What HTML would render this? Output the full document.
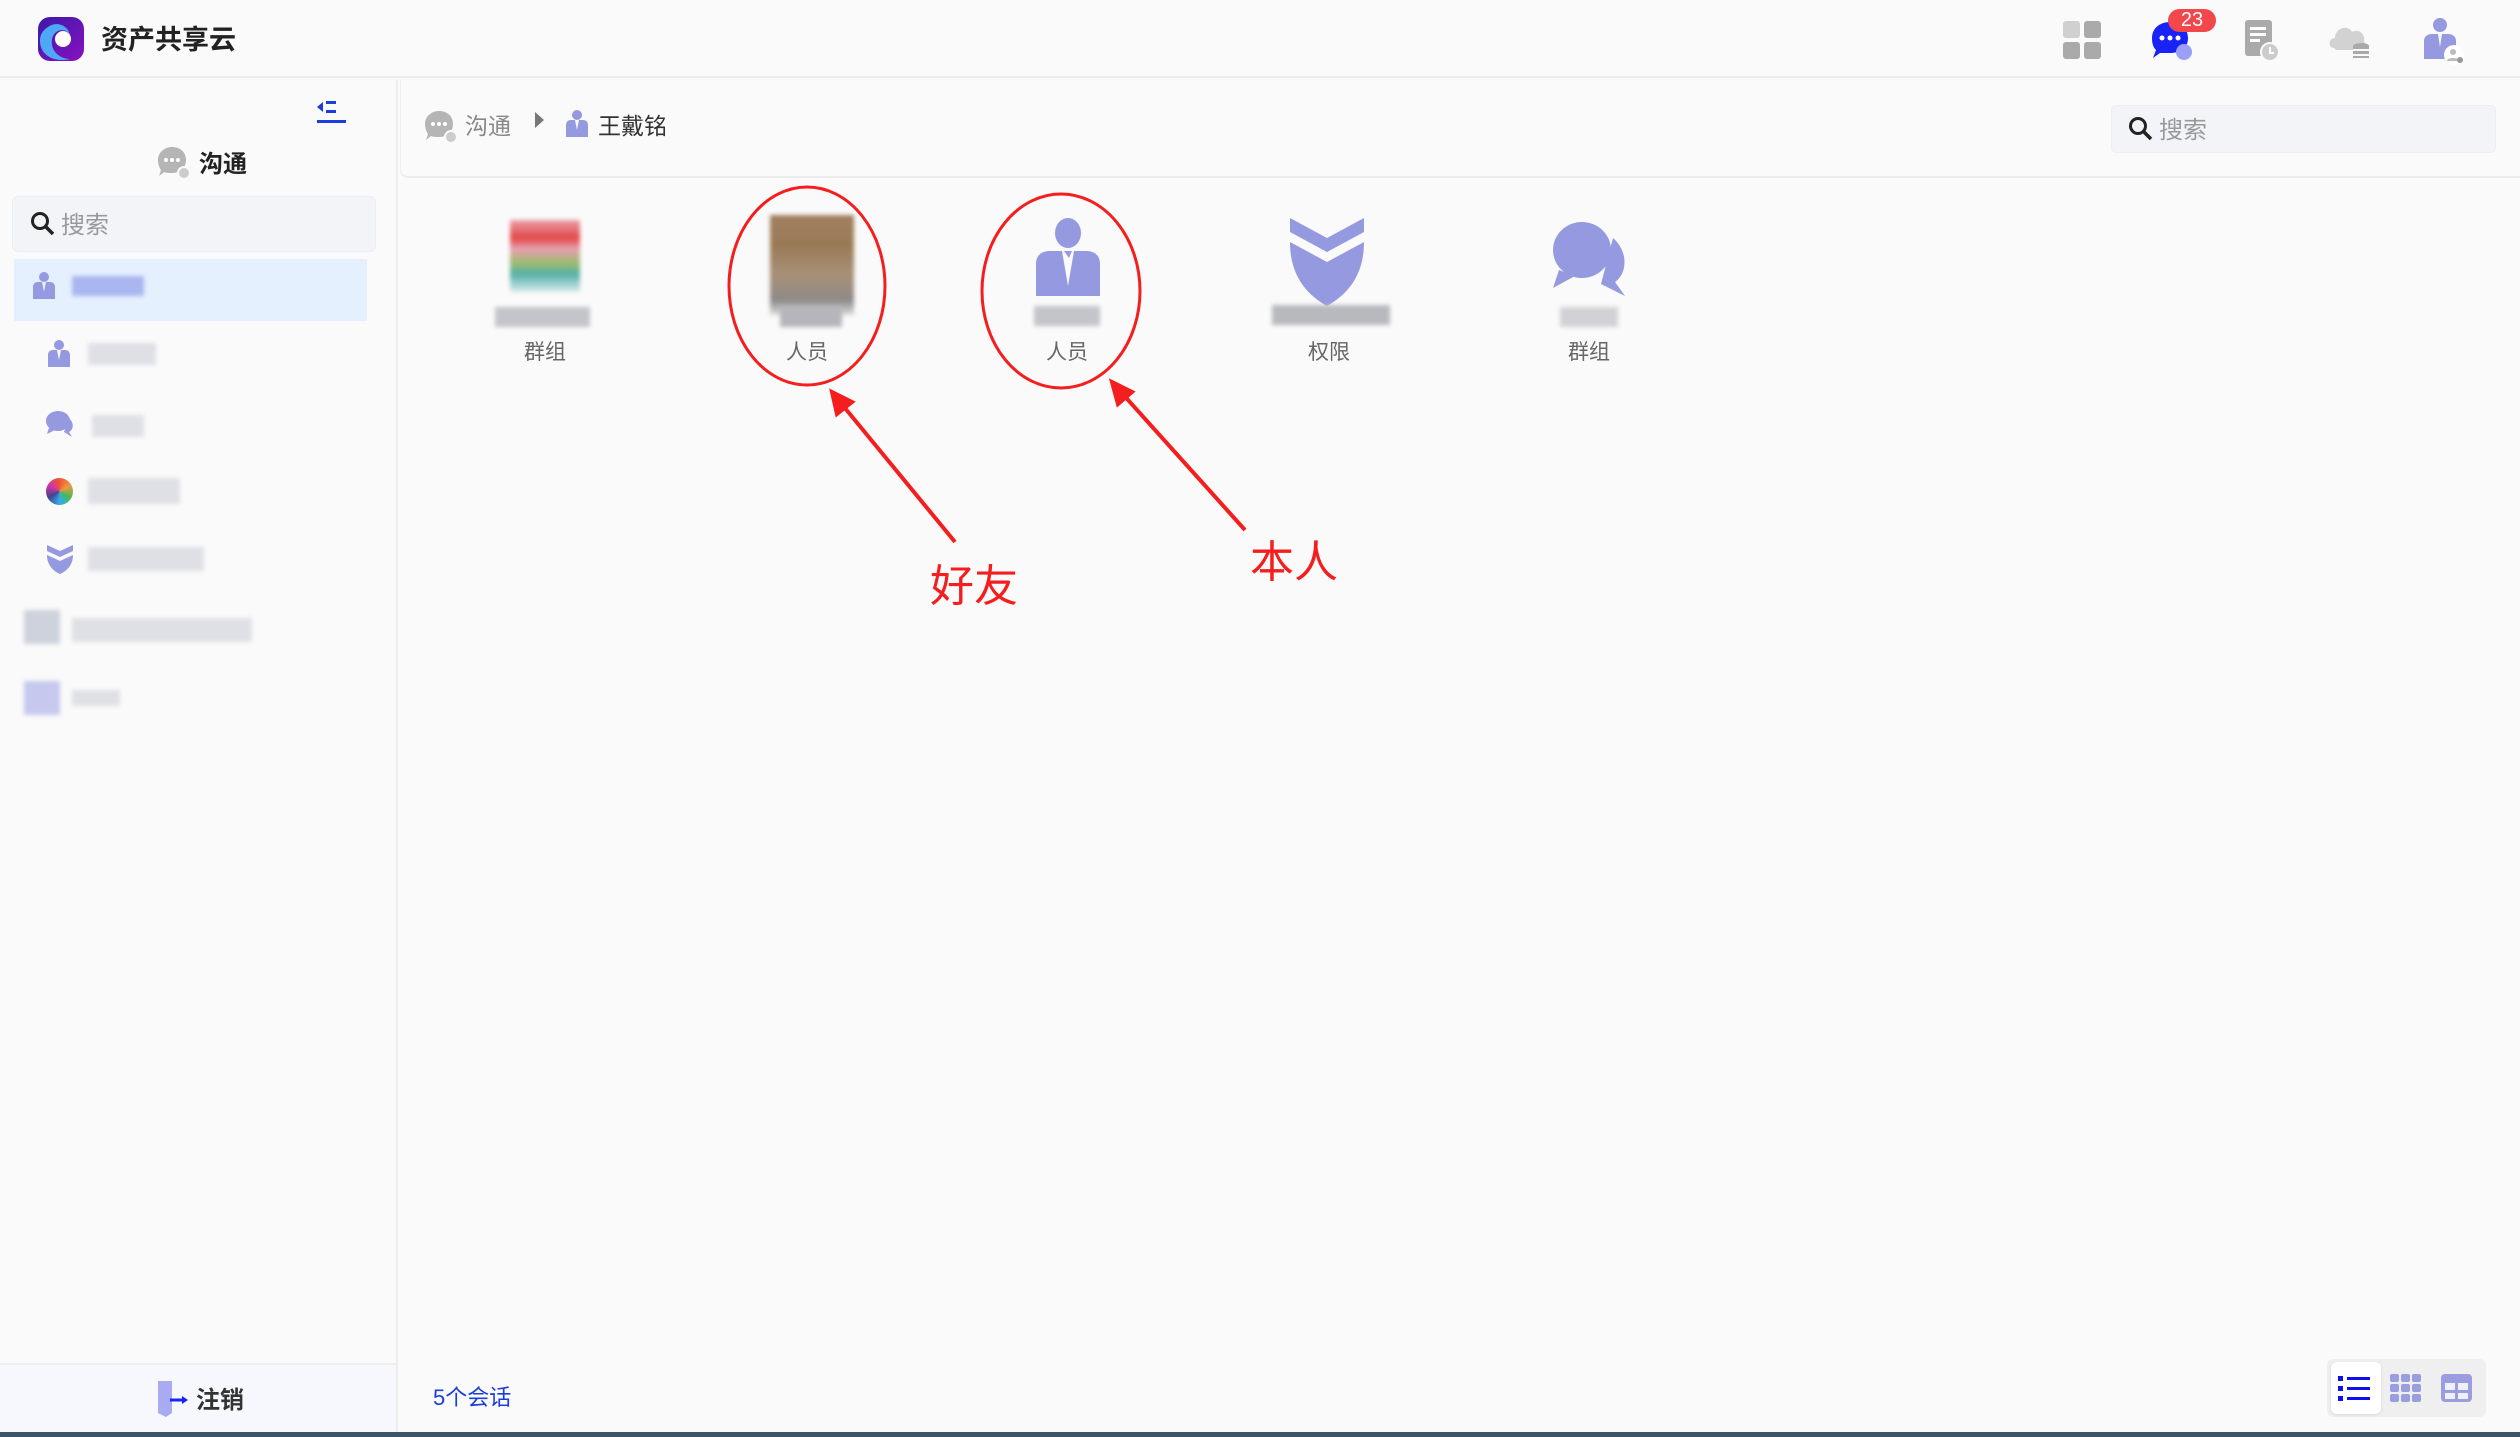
<!DOCTYPE html>
<html><head><meta charset="utf-8">
<style>
*{margin:0;padding:0;box-sizing:border-box}
body{width:2520px;height:1437px;background:#fafafa;font-family:"Liberation Sans","Noto Sans CJK SC",sans-serif;position:relative;overflow:hidden;color:#333}
.a{position:absolute}
.blur{position:absolute;background:#dfe0e6;filter:blur(2px)}
.lbl{position:absolute;font-size:21px;color:#666;width:120px;text-align:center;top:336px}
</style></head><body>
<div class="a" style="left:0;top:0;width:2520px;height:78px;background:#fafafa;border-bottom:2px solid #ececec"></div>
<svg class="a" style="left:36px;top:15px" width="52" height="48" viewBox="0 0 52 48">
<defs><linearGradient id="g1" x1="0" y1="0" x2="1" y2="1"><stop offset="0" stop-color="#3a1aa8"/><stop offset="1" stop-color="#8a10c0"/></linearGradient></defs>
<rect x="2" y="2" width="46" height="44" rx="12" fill="url(#g1)"/>
<path d="M4 26 C4 40 18 48 34 44 C24 44 14 36 16 24 C18 14 30 12 34 20 C32 10 20 6 12 12 C6 16 4 20 4 26Z" fill="#4fa8f5"/>
<circle cx="27" cy="24" r="8" fill="#fff"/>
</svg>
<div class="a" style="left:101px;top:18px;font-size:27px;font-weight:bold;color:#222">资产共享云</div>
<svg class="a" style="left:2063px;top:21px" width="38" height="38"><rect x="0" y="0" width="17" height="17" rx="3" fill="#d0d0d0"/><rect x="21" y="0" width="17" height="17" rx="3" fill="#aaa"/><rect x="0" y="21" width="17" height="17" rx="3" fill="#aaa"/><rect x="21" y="21" width="17" height="17" rx="3" fill="#aaa"/></svg>
<svg class="a" style="left:2150px;top:20px" width="46" height="42"><path d="M2 18 C2 8 10 2 20 2 C30 2 38 8 38 18 C38 28 30 33 20 33 L10 33 L3 38 L6 30 C3 27 2 23 2 18Z" fill="#1a23f5"/><circle cx="12" cy="18" r="2.5" fill="#fff"/><circle cx="20" cy="18" r="2.5" fill="#fff"/><circle cx="28" cy="18" r="2.5" fill="#fff"/><circle cx="34" cy="32" r="8" fill="#9aa0f5"/></svg>
<div class="a" style="left:2168px;top:9px;width:48px;height:23px;border-radius:12px;background:#f2484b;color:#fff;font-size:20px;text-align:center;line-height:23px">23</div>
<svg class="a" style="left:2244px;top:19px" width="36" height="42"><rect x="1" y="1" width="27" height="36" rx="3" fill="#aaa"/><rect x="6" y="8" width="16" height="3" fill="#fff"/><rect x="6" y="14" width="16" height="3" fill="#fff"/><rect x="6" y="20" width="10" height="3" fill="#fff"/><circle cx="26" cy="33" r="9" fill="#ccc" stroke="#fafafa" stroke-width="2"/><path d="M26 28 V34 H30" stroke="#fff" stroke-width="2" fill="none"/></svg>
<svg class="a" style="left:2328px;top:20px" width="44" height="40"><path d="M6 28 C0 28 0 18 7 18 C7 8 20 4 24 12 C30 8 38 14 36 22 C40 24 38 30 34 30 L8 30Z" fill="#d2d2d2"/><ellipse cx="33" cy="26" rx="8" ry="3" fill="#aaa"/><rect x="25" y="26" width="16" height="12" fill="#aaa"/><rect x="25" y="29" width="16" height="2" fill="#fafafa"/><rect x="25" y="34" width="16" height="2" fill="#fafafa"/></svg>
<svg class="a" style="left:2422px;top:17px" width="44" height="48"><circle cx="18" cy="8" r="7" fill="#9499e0"/><path d="M2 42 V24 C2 19 6 17 10 17 L16 17 L18 30 L20 17 L26 17 C30 17 34 19 34 24 V42Z" fill="#9499e0"/><circle cx="32" cy="38" r="10" fill="#fff"/><circle cx="31" cy="35" r="3" fill="#bbb"/><path d="M25 44 C25 40 37 40 37 44Z" fill="#bbb"/><circle cx="38" cy="43" r="3" fill="#999"/></svg>

<div class="a" style="left:0;top:80px;width:398px;height:1283px;background:#fafafa;border-right:2px solid #eee"></div>
<svg class="a" style="left:317px;top:99px" width="30" height="26"><path d="M0 8 L6 3 V13Z" fill="#1a3ddb"/><rect x="9" y="2" width="10" height="3" fill="#1a3ddb"/><rect x="9" y="11" width="10" height="3" fill="#1a3ddb"/><rect x="0" y="21" width="29" height="3" fill="#1a3ddb"/></svg>
<svg class="a" style="left:157px;top:146px" width="36" height="34"><path d="M1 14 C1 6 8 1 15 1 C23 1 29 6 29 14 C29 22 23 27 15 27 C12 27 9 27 7 26 L2 30 L4 24 C2 21 1 18 1 14Z" fill="#b5b5b5"/><circle cx="9" cy="14" r="2" fill="#fff"/><circle cx="15" cy="14" r="2" fill="#fff"/><circle cx="21" cy="14" r="2" fill="#fff"/><circle cx="27" cy="27" r="6" fill="#ccc" stroke="#fafafa" stroke-width="2"/></svg>
<div class="a" style="left:199px;top:144px;font-size:24px;font-weight:bold;color:#222">沟通</div>
<div class="a" style="left:12px;top:196px;width:364px;height:56px;background:#f3f4f8;border:1px solid #eceef5;border-radius:6px"></div>
<svg class="a" style="left:30px;top:211px" width="26" height="26"><circle cx="10" cy="10" r="7.5" stroke="#222" stroke-width="3" fill="none"/><path d="M15 15 L23 23" stroke="#222" stroke-width="3.5"/></svg>
<div class="a" style="left:61px;top:205px;font-size:24px;color:#999">搜索</div>
<div class="a" style="left:14px;top:259px;width:353px;height:62px;background:#e5f0fe"></div>
<svg class="a" style="left:33px;top:272px" width="24" height="28" viewBox="0 0 24 28"><circle cx="11" cy="5" r="5" fill="#9499e0"/><path d="M0 27 V15 C0 12 2 10 5 10 L9 10 L11 20 L13 10 L17 10 C20 10 22 12 22 15 V27Z" fill="#9499e0"/></svg>
<div class="blur" style="left:72px;top:276px;width:72px;height:20px;background:#a9b6ef"></div>
<svg class="a" style="left:48px;top:340px" width="24" height="28" viewBox="0 0 24 28"><circle cx="11" cy="5" r="5" fill="#9499e0"/><path d="M0 27 V15 C0 12 2 10 5 10 L9 10 L11 20 L13 10 L17 10 C20 10 22 12 22 15 V27Z" fill="#9499e0"/></svg>
<div class="blur" style="left:88px;top:343px;width:68px;height:22px"></div>
<svg class="a" style="left:45px;top:410px" width="30" height="28"><ellipse cx="13" cy="11" rx="12" ry="10" fill="#9499e0"/><path d="M4 18 L2 24 L10 20Z" fill="#9499e0"/><path d="M24 8 C30 14 28 20 24 22 L27 27 L19 22Z" fill="#9499e0"/></svg>
<div class="blur" style="left:92px;top:415px;width:52px;height:22px"></div>
<div class="a" style="left:46px;top:478px;width:27px;height:27px;border-radius:50%;background:conic-gradient(#e53,#e94,#4b5,#3ae,#448,#c3a,#e53)"></div>
<div class="blur" style="left:88px;top:478px;width:92px;height:26px"></div>
<svg class="a" style="left:47px;top:545px" width="26" height="30"><path d="M0 0 L13 6 L26 0 V6 L13 12 L0 6Z" fill="#9499e0"/><path d="M0 10 L13 16 L26 10 C26 20 20 26 13 29 C6 26 0 20 0 10Z" fill="#9499e0"/></svg>
<div class="blur" style="left:88px;top:547px;width:116px;height:24px"></div>
<div class="blur" style="left:24px;top:610px;width:36px;height:34px;background:#cdd2dc"></div>
<div class="blur" style="left:72px;top:618px;width:180px;height:24px"></div>
<div class="blur" style="left:24px;top:681px;width:36px;height:34px;background:#c6c8ee"></div>
<div class="blur" style="left:72px;top:690px;width:48px;height:16px"></div>
<div class="a" style="left:0;top:1363px;width:398px;height:70px;background:#f7f8fd;border-top:2px solid #eee;border-right:2px solid #eee"></div>
<svg class="a" style="left:156px;top:1380px" width="42" height="38"><path d="M2 1 H16 V33 L10 37 L2 33Z" fill="#a8aaf2"/><path d="M14 20 H28" stroke="#1a23f5" stroke-width="3"/><path d="M26 16 L32 20 L26 24Z" fill="#1a23f5"/></svg>
<div class="a" style="left:196px;top:1380px;font-size:24px;font-weight:bold;color:#333">注销</div>

<div class="a" style="left:400px;top:80px;width:2120px;height:98px;border-bottom:2px solid #ececec;border-left:1px solid #eee;border-radius:0 0 0 8px"></div>
<svg class="a" style="left:424px;top:110px" width="36" height="34"><path d="M1 14 C1 6 8 1 15 1 C23 1 29 6 29 14 C29 22 23 27 15 27 C12 27 9 27 7 26 L2 30 L4 24 C2 21 1 18 1 14Z" fill="#b5b5b5"/><circle cx="9" cy="14" r="2" fill="#fff"/><circle cx="15" cy="14" r="2" fill="#fff"/><circle cx="21" cy="14" r="2" fill="#fff"/><circle cx="27" cy="27" r="6" fill="#ccc" stroke="#fafafa" stroke-width="2"/></svg>
<div class="a" style="left:465px;top:107px;font-size:23px;color:#888">沟通</div>
<svg class="a" style="left:534px;top:111px" width="12" height="18"><path d="M1 1 L10 9 L1 17Z" fill="#777"/></svg>
<svg class="a" style="left:566px;top:110px" width="24" height="28" viewBox="0 0 24 28"><circle cx="11" cy="5" r="5" fill="#9499e0"/><path d="M0 27 V15 C0 12 2 10 5 10 L9 10 L11 20 L13 10 L17 10 C20 10 22 12 22 15 V27Z" fill="#9499e0"/></svg>
<div class="a" style="left:598px;top:107px;font-size:23px;color:#333">王戴铭</div>
<div class="a" style="left:2111px;top:105px;width:385px;height:48px;background:#f3f4f8;border:1px solid #eceef5;border-radius:5px"></div>
<svg class="a" style="left:2128px;top:116px" width="26" height="26"><circle cx="10" cy="10" r="7.5" stroke="#222" stroke-width="3" fill="none"/><path d="M15 15 L23 23" stroke="#222" stroke-width="3.5"/></svg>
<div class="a" style="left:2159px;top:110px;font-size:24px;color:#999">搜索</div>

<div class="a" style="left:510px;top:220px;width:70px;height:72px;background:linear-gradient(180deg,#e9a0a8,#e24848 25%,#e8a0b0 40%,#9dbb70 60%,#55b0a8 75%,#d8eaea);filter:blur(2px)"></div>
<div class="blur" style="left:495px;top:307px;width:95px;height:20px;background:#c4c5ca"></div>
<div class="lbl" style="left:485px">群组</div>
<div class="a" style="left:770px;top:215px;width:84px;height:100px;background:linear-gradient(180deg,#a08060,#9a7a55 30%,#a89078 60%,#8e8a88 85%,#ddd);filter:blur(2px)"></div>
<div class="blur" style="left:780px;top:307px;width:62px;height:20px;background:#b5b5bb"></div>
<div class="lbl" style="left:747px">人员</div>
<svg class="a" style="left:1036px;top:218px" width="64" height="78" viewBox="0 0 64 78"><ellipse cx="32" cy="15" rx="13" ry="15" fill="#9499e0"/><path d="M0 78 V46 C0 37 6 33 14 33 L26 33 L32 68 L38 33 L50 33 C58 33 64 37 64 46 V78Z" fill="#9499e0"/><path d="M28 33 L36 33 L33 40Z" fill="#9499e0"/></svg>
<div class="blur" style="left:1034px;top:306px;width:66px;height:20px;background:#c4c5ca"></div>
<div class="lbl" style="left:1007px">人员</div>
<svg class="a" style="left:1290px;top:218px" width="74" height="92" viewBox="0 0 74 92"><path d="M0 0 L37 20 L74 0 V14 L37 34 L0 14Z" fill="#9499e0"/><path d="M0 24 L37 44 L74 24 C74 55 60 75 37 88 C14 75 0 55 0 24Z" fill="#9499e0"/></svg>
<div class="blur" style="left:1272px;top:305px;width:118px;height:20px;background:#b8b9bf"></div>
<div class="lbl" style="left:1269px">权限</div>
<svg class="a" style="left:1549px;top:222px" width="82" height="76" viewBox="0 0 82 76"><ellipse cx="33" cy="28" rx="29" ry="28" fill="#9499e0"/><path d="M10 48 L4 66 L26 54Z" fill="#9499e0"/><path d="M64 16 C80 30 78 52 66 60 L76 74 L52 62Z" fill="#9499e0"/></svg>
<div class="blur" style="left:1560px;top:307px;width:58px;height:20px;background:#d2d2d6"></div>
<div class="lbl" style="left:1529px">群组</div>

<svg class="a" style="left:0;top:0" width="2520" height="1437">
<ellipse cx="807" cy="286" rx="78" ry="99" fill="none" stroke="#f41e1e" stroke-width="3"/>
<ellipse cx="1061" cy="291" rx="79" ry="97" fill="none" stroke="#f41e1e" stroke-width="3"/>
<path d="M955 542 L840 402" stroke="#f41e1e" stroke-width="4"/>
<path d="M832 392 L852 402 L837 414Z" fill="#f41e1e" stroke="#f41e1e" stroke-width="4"/>
<path d="M1245 530 L1120 391" stroke="#f41e1e" stroke-width="4"/>
<path d="M1112 382 L1132 392 L1118 404Z" fill="#f41e1e" stroke="#f41e1e" stroke-width="4"/>
</svg>
<div class="a" style="left:930px;top:550px;font-size:44px;color:#f41e1e">好友</div>
<div class="a" style="left:1250px;top:526px;font-size:44px;color:#f41e1e">本人</div>

<div class="a" style="left:433px;top:1380px;font-size:22px;color:#1a3ddb">5个会话</div>
<div class="a" style="left:2327px;top:1359px;width:159px;height:58px;background:#efeff0;border-radius:6px"></div>
<div class="a" style="left:2331px;top:1362px;width:50px;height:52px;background:#fff;border-radius:6px;box-shadow:0 1px 3px rgba(0,0,0,.1)"></div>
<svg class="a" style="left:2338px;top:1374px" width="36" height="32"><rect x="0" y="2" width="5" height="5" fill="#1010ee"/><rect x="0" y="12" width="5" height="5" fill="#1010ee"/><rect x="0" y="22" width="5" height="5" fill="#1010ee"/><rect x="9" y="3" width="23" height="3" fill="#1010ee"/><rect x="9" y="13" width="23" height="3" fill="#1010ee"/><rect x="9" y="23" width="23" height="3" fill="#1010ee"/></svg>
<svg class="a" style="left:2390px;top:1374px" width="34" height="30"><g fill="#9a9de0"><rect x="0" y="0" width="9" height="8" rx="2"/><rect x="11" y="0" width="9" height="8" rx="2"/><rect x="22" y="0" width="9" height="8" rx="2"/><rect x="0" y="10" width="9" height="8" rx="2"/><rect x="11" y="10" width="9" height="8" rx="2"/><rect x="22" y="10" width="9" height="8" rx="2"/><rect x="0" y="20" width="9" height="8" rx="2"/><rect x="11" y="20" width="9" height="8" rx="2"/><rect x="22" y="20" width="9" height="8" rx="2"/></g></svg>
<svg class="a" style="left:2441px;top:1374px" width="32" height="30"><rect x="0" y="0" width="31" height="28" rx="4" fill="#9a9de0"/><rect x="4" y="9" width="10" height="7" fill="#fff" opacity=".85"/><rect x="17" y="9" width="10" height="7" fill="#fff" opacity=".85"/><rect x="4" y="19" width="10" height="6" fill="#fff" opacity=".85"/><rect x="17" y="19" width="10" height="6" fill="#fff" opacity=".85"/></svg>
<div class="a" style="left:0;top:1432px;width:2520px;height:5px;background:#3d5566"></div>
</body></html>
